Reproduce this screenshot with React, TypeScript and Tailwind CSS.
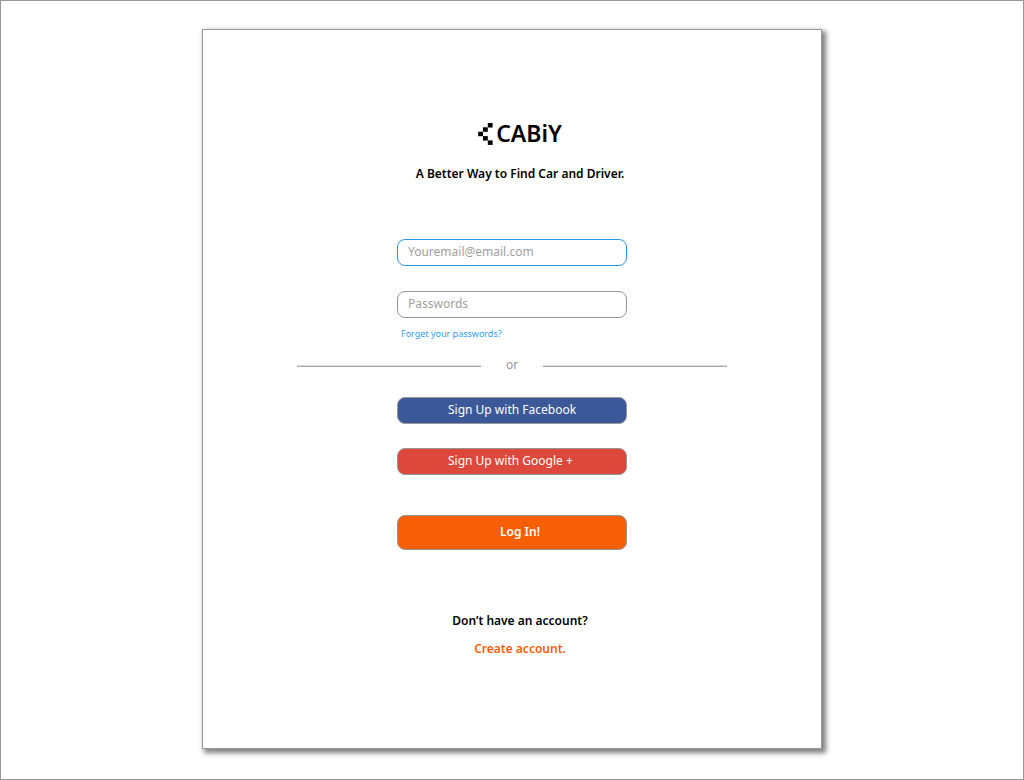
import type { ButtonHTMLAttributes, InputHTMLAttributes } from "react";

function Logo() {
  return (
    <div className="flex items-center justify-center gap-[2px] h-7">
      <svg width="16" height="22" viewBox="0 0 16 22" aria-hidden="true">
        <rect x="9.8" y="0" width="4.8" height="4.5" />
        <rect x="5" y="4.3" width="4.8" height="4.5" />
        <rect x="0.2" y="8.7" width="4.8" height="4.5" />
        <rect x="5" y="13.1" width="4.8" height="4.5" />
        <rect x="9.8" y="17.4" width="4.8" height="4.5" />
      </svg>
      <h1 className="pb-[2px] text-[23px] leading-7 font-semibold">CABiY</h1>
    </div>
  );
}

function Field({ className, ...props }: InputHTMLAttributes<HTMLInputElement>) {
  return (
    <input
      {...props}
      className={`block w-full h-[27px] rounded-lg border bg-white px-[10px] pb-[2px] text-xs leading-5 text-gray-800 placeholder:text-[#a0a0a0] outline-none ${className}`}
    />
  );
}

function SocialButton({ className, ...props }: ButtonHTMLAttributes<HTMLButtonElement>) {
  return (
    <button
      type="button"
      {...props}
      className={`flex items-center w-full h-[27px] rounded-lg border border-[#979797] pb-[2px] pl-[50px] text-xs text-white cursor-pointer ${className}`}
    />
  );
}

function Rule() {
  return <div className="flex-1 border-y border-t-[#dddddd] border-b-[#a6a6a6]" />;
}

export default function App() {
  return (
    <div className="min-h-screen flex justify-center items-start border border-[#979797] bg-white py-7 font-['Noto_Sans',sans-serif] text-black">
      <main className="w-full max-w-[620px] border border-[#979797] bg-white pt-[90px] pb-[89px] shadow-[3px_3px_5px_1px_rgba(0,0,0,0.5)]">
        <header className="pl-4 text-center">
          <Logo />
          <p className="mt-4 text-xs leading-5 font-semibold">A Better Way to Find Car and Driver.</p>
        </header>

        <form className="mt-[55px]" onSubmit={(e) => e.preventDefault()}>
          <div className="mx-auto w-full max-w-[230px]">
            <Field aria-label="Email" type="email" placeholder="Youremail@email.com" className="border-[#2699e6]" />
            <Field
              aria-label="Password"
              type="password"
              placeholder="Passwords"
              className="mt-[25px] border-[#979797]"
            />
            <a href="#forgot" className="block mt-2 pl-1 text-[9px] leading-4 text-[#2d9fe9]">
              Forget your passwords?
            </a>
          </div>

          <div className="mx-auto mt-[13px] flex w-full max-w-[430px] items-center">
            <Rule />
            <span className="w-[62px] pb-[2px] text-center text-xs leading-5 text-[#979797]">or</span>
            <Rule />
          </div>

          <div className="mx-auto mt-5 w-full max-w-[230px]">
            <SocialButton className="bg-[#3b5998]">Sign Up with Facebook</SocialButton>
            <SocialButton className="mt-6 bg-[#dc483b]">Sign Up with Google +</SocialButton>
            <button
              type="submit"
              className="mt-10 block w-full h-[35px] rounded-lg border border-[#979797] bg-[#f75f07] pb-[2px] pl-4 text-xs font-semibold text-white cursor-pointer"
            >
              Log In!
            </button>
          </div>
        </form>

        <footer className="mt-[61px] pl-4 text-center text-xs leading-5 font-semibold">
          <p>Don’t have an account?</p>
          <a href="#signup" className="inline-block mt-2 text-[#f75f07]">
            Create account.
          </a>
        </footer>
      </main>
    </div>
  );
}
